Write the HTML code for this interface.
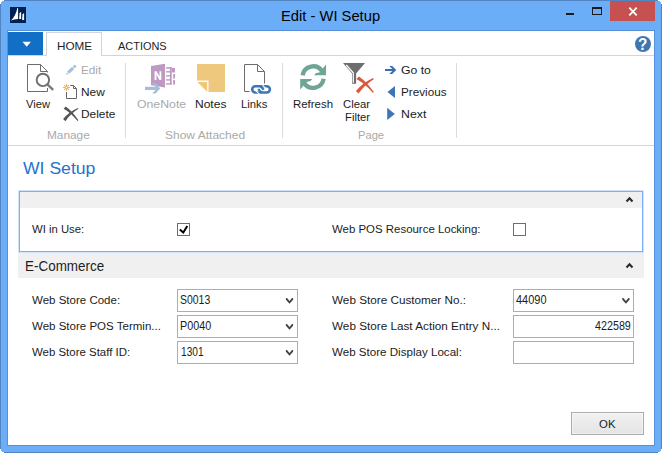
<!DOCTYPE html>
<html>
<head>
<meta charset="utf-8">
<title>Edit - WI Setup</title>
<style>
html,body{margin:0;padding:0;}
body{width:662px;height:453px;overflow:hidden;background:#fff;font-family:"Liberation Sans",sans-serif;font-size:12px;color:#000;position:relative;}
.a{position:absolute;}
.t{position:absolute;white-space:nowrap;line-height:1;transform-origin:0 0;}
#frame{left:0;top:0;width:662px;height:453px;background:#6badf7;box-sizing:border-box;border:1px solid #5284c1;}
#client{left:8px;top:31px;width:646px;height:414px;background:#fff;box-shadow:0 0 0 1px #5791db;}
#close{left:610px;top:1px;width:45px;height:20px;background:#c75050;}
#appbtn{left:8px;top:32px;width:35px;height:23px;background:#116fc6;}
#tabline{left:8px;top:55px;width:646px;height:1px;background:#d4d4d4;}
#hometab{left:46px;top:32px;width:56px;height:24px;background:#fff;border:1px solid #d4d4d4;border-bottom:none;box-sizing:border-box;}
#ribline{left:8px;top:145px;width:646px;height:1px;background:#d4d4d4;}
.sep{position:absolute;width:1px;background:#dcdcdc;top:63px;height:75px;}
.fth{position:absolute;background:#f0f0f0;}
.inp{position:absolute;box-sizing:border-box;border:1px solid #abadb3;background:#fff;width:121px;height:23px;}
.chk{position:absolute;box-sizing:border-box;width:13px;height:13px;border:1px solid #6e6e6e;background:#fff;}
#ok{left:571px;top:412px;width:73px;height:23px;box-sizing:border-box;border:1px solid #acacac;background:linear-gradient(#f1f1f1,#e4e4e4);box-shadow:inset 0 0 0 1px rgba(255,255,255,0.45);}
svg{position:absolute;left:0;top:0;overflow:visible;}
</style>
</head>
<body>
<div class="a" id="frame"></div>
<div class="a" id="client"></div>
<div class="a" id="close"></div>
<span class="t" style="left:280.73px;top:9px;font-size:14.6px;color:#000;transform:scaleX(1.0099);">Edit - WI Setup</span>
<div class="a" id="tabline"></div>
<div class="a" id="appbtn"></div>
<div class="a" id="hometab"></div>
<span class="t" style="left:56.80px;top:41px;font-size:11.8px;color:#1e1e1e;transform:scaleX(0.9934);">HOME</span>
<span class="t" style="left:118.08px;top:41px;font-size:11.8px;color:#1e1e1e;transform:scaleX(0.9281);">ACTIONS</span>
<div class="a" id="ribline"></div>
<div class="sep" style="left:125px;"></div>
<div class="sep" style="left:282px;"></div>
<div class="sep" style="left:456px;"></div>
<span class="t" style="left:26.14px;top:98px;font-size:11.7px;color:#1c1c1c;transform:scaleX(0.954);">View</span><span class="t" style="left:80.70px;top:64px;font-size:11.7px;color:#a9a9a9;transform:scaleX(1.0046);">Edit</span><span class="t" style="left:80.70px;top:86px;font-size:11.7px;color:#1c1c1c;transform:scaleX(1.0172);">New</span><span class="t" style="left:80.70px;top:108px;font-size:11.7px;color:#1c1c1c;transform:scaleX(1.0181);">Delete</span><span class="t" style="left:46.60px;top:129px;font-size:11.7px;color:#a9a9a9;transform:scaleX(1.0126);">Manage</span>
<span class="t" style="left:137.08px;top:98px;font-size:11.7px;color:#a9a9a9;transform:scaleX(1.0501);">OneNote</span><span class="t" style="left:195.00px;top:98px;font-size:11.7px;color:#1c1c1c;transform:scaleX(1.0282);">Notes</span><span class="t" style="left:241.40px;top:98px;font-size:11.7px;color:#1c1c1c;transform:scaleX(0.9675);">Links</span><span class="t" style="left:165.20px;top:129px;font-size:11.7px;color:#a9a9a9;transform:scaleX(1.0276);">Show Attached</span>
<span class="t" style="left:293.30px;top:98px;font-size:11.7px;color:#1c1c1c;transform:scaleX(0.9788);">Refresh</span><span class="t" style="left:342.68px;top:98px;font-size:11.7px;color:#1c1c1c;transform:scaleX(0.9675);">Clear</span><span class="t" style="left:344.70px;top:111px;font-size:11.7px;color:#1c1c1c;transform:scaleX(0.9642);">Filter</span><span class="t" style="left:401.04px;top:64px;font-size:11.7px;color:#1c1c1c;transform:scaleX(1.0445);">Go to</span><span class="t" style="left:400.80px;top:86px;font-size:11.7px;color:#1c1c1c;transform:scaleX(1.0003);">Previous</span><span class="t" style="left:400.60px;top:108px;font-size:11.7px;color:#1c1c1c;transform:scaleX(1.0535);">Next</span><span class="t" style="left:357.50px;top:129px;font-size:11.7px;color:#a9a9a9;transform:scaleX(0.955);">Page</span>
<span class="t" style="left:23.49px;top:161px;font-size:16.9px;color:#2672cc;transform:scaleX(1.0418);">WI Setup</span>
<div class="fth" style="left:20px;top:192px;width:622px;height:16px;"></div>
<div class="a" style="left:19px;top:191px;width:624px;height:61px;box-sizing:border-box;border:1px solid #7eaefa;box-shadow:0 0 0 1px rgba(126,174,250,0.35);"></div>
<span class="t" style="left:32.08px;top:223px;font-size:11.7px;color:#1c1c1c;transform:scaleX(0.9686);">WI in Use:</span>
<div class="chk" style="left:177px;top:223px;"></div>
<span class="t" style="left:332.18px;top:223px;font-size:11.7px;color:#1c1c1c;transform:scaleX(0.9784);">Web POS Resource Locking:</span>
<div class="chk" style="left:513px;top:223px;"></div>
<div class="fth" style="left:18px;top:253px;width:626px;height:25px;"></div>
<span class="t" style="left:24.80px;top:259px;font-size:14.2px;color:#1e1e1e;transform:scaleX(0.9475);">E-Commerce</span>
<span class="t" style="left:32.38px;top:294px;font-size:11.7px;color:#1c1c1c;transform:scaleX(0.9852);">Web Store Code:</span><span class="t" style="left:32.38px;top:320px;font-size:11.7px;color:#1c1c1c;transform:scaleX(0.9856);">Web Store POS Termin...</span><span class="t" style="left:32.38px;top:346px;font-size:11.7px;color:#1c1c1c;transform:scaleX(0.9786);">Web Store Staff ID:</span>
<div class="inp" style="left:177px;top:289px;"></div>
<div class="inp" style="left:177px;top:315px;"></div>
<div class="inp" style="left:177px;top:341px;"></div>
<span class="t" style="left:179.54px;top:295px;font-size:11.9px;color:#1c1c1c;transform:scaleX(0.8802);">S0013</span><span class="t" style="left:180.02px;top:321px;font-size:11.9px;color:#1c1c1c;transform:scaleX(0.9072);">P0040</span><span class="t" style="left:180.71px;top:347px;font-size:11.9px;color:#1c1c1c;transform:scaleX(0.8538);">1301</span>
<span class="t" style="left:331.98px;top:294px;font-size:11.7px;color:#1c1c1c;transform:scaleX(1.0034);">Web Store Customer No.:</span><span class="t" style="left:331.88px;top:320px;font-size:11.7px;color:#1c1c1c;transform:scaleX(1.0034);">Web Store Last Action Entry N...</span><span class="t" style="left:331.88px;top:346px;font-size:11.7px;color:#1c1c1c;transform:scaleX(0.9914);">Web Store Display Local:</span>
<div class="inp" style="left:513px;top:289px;"></div>
<div class="inp" style="left:513px;top:315px;"></div>
<div class="inp" style="left:513px;top:341px;"></div>
<span class="t" style="left:515.89px;top:295px;font-size:11.9px;color:#1c1c1c;transform:scaleX(0.9222);">44090</span><span class="t" style="left:595.21px;top:321px;font-size:11.9px;color:#1c1c1c;transform:scaleX(0.9029);">422589</span>
<div class="a" id="ok"></div>
<span class="t" style="left:598.81px;top:419px;font-size:11.8px;color:#1c1c1c;transform:scaleX(0.9673);">OK</span>

<svg width="662" height="453" viewBox="0 0 662 453">
<!-- corner notches -->
<g fill="#fff">
<rect x="0" y="0" width="4" height="1"/><rect x="0" y="0" width="2" height="2"/><rect x="0" y="0" width="1" height="4"/>
<rect x="658" y="0" width="4" height="1"/><rect x="660" y="0" width="2" height="2"/><rect x="661" y="0" width="1" height="4"/>
<rect x="0" y="452" width="4" height="1"/><rect x="0" y="451" width="2" height="2"/><rect x="0" y="449" width="1" height="4"/>
<rect x="658" y="452" width="4" height="1"/><rect x="660" y="451" width="2" height="2"/><rect x="661" y="449" width="1" height="4"/>
</g>
<!-- app icon -->
<g transform="translate(10,7)">
<rect width="16" height="16" fill="#00204f"/>
<path d="M1,13.4 Q5.6,9 7.4,0.9 L8.1,0.9 L8.1,11.9 Q4,12.1 1,13.4 Z" fill="#fff"/>
<path d="M9.1,12.1 L9.6,6.2 L10.6,5 L11.1,5.4 L11.1,12.1 Z" fill="#fff"/>
<path d="M12.1,12.9 L12.5,7.4 L13.6,6.2 L14.1,6.6 L14.1,12.9 Z" fill="#fff"/>
</g>
<!-- window buttons -->
<rect x="566" y="13" width="8" height="2" fill="#1a1a1a"/>
<path d="M592,7 h10 v8 h-10 Z M593,9 v5 h8 v-5 Z" fill="#1e1a17" fill-rule="evenodd"/>
<path d="M629.3,7.7 L636.7,15.3 M636.7,7.7 L629.3,15.3" stroke="#fff" stroke-width="1.8" fill="none"/>
<!-- app menu triangle -->
<path d="M22.5,41.7 L30.9,41.7 L26.7,46.8 Z" fill="#fff"/>
<!-- help -->
<circle cx="643" cy="44" r="8" fill="#3e76b2"/>
<!-- View icon -->
<g fill="none" stroke="#6d6d6d" stroke-width="1">
<path d="M47.5,72.5 V71.5 L40.5,64.5 H27.5 V91.5 H47.5 V88"/>
<path d="M40.5,64.5 V71.5 H47.5"/>
</g>
<circle cx="42.9" cy="79.9" r="6.2" fill="#fff" stroke="#6f6f6f" stroke-width="1.9"/>
<path d="M47.6,84.6 L53.2,89.9" stroke="#7a7a7a" stroke-width="2.4" fill="none"/>
<!-- Edit pencil -->
<g transform="translate(66.1,74.7) rotate(-44.1)" fill="#a3bfdd"><path d="M0,0 L2.3,-1.2 V1.2 Z"/><rect x="3" y="-1.5" width="6.9" height="3"/><rect x="10.6" y="-1.5" width="2.7" height="3" rx="1.1"/></g>
<!-- New icon -->
<g fill="none" stroke="#666" stroke-width="1">
<path d="M70.2,85.5 H73.5 L76.5,88.5 V98.5 H66.5 V92"/>
<path d="M73.5,85.5 V88.5 H76.5"/>
</g>
<g stroke="#e8b56d" stroke-width="1.1" fill="none">
<path d="M66.5,84 V91 M63,87.5 H70 M64.1,85.1 L68.9,89.9 M68.9,85.1 L64.1,89.9"/>
</g>
<circle cx="66.5" cy="87.5" r="0.8" fill="#fff"/>
<!-- Delete icon -->
<path d="M63.6,108.8 L65.7,106.5 Q72.4,111.2 78.4,120.3 L77.6,121.1 Q70.6,112.6 63.6,108.8 Z" fill="#555"/>
<path d="M63.1,118.9 L65.5,121.2 Q70.6,113.6 78.4,108.8 L77.7,107.9 Q68.8,112 63.1,118.9 Z" fill="#555"/>
<!-- OneNote -->
<path d="M151,66 L165,63.7 V87.6 L151,85.3 Z" fill="#be9ac2"/>
<g fill="#be9ac2">
<rect x="166" y="67.2" width="5.7" height="1.5"/>
<rect x="166" y="71.1" width="4" height="1.4"/>
<rect x="166" y="75.1" width="4" height="1.4"/>
<rect x="166" y="79.2" width="4" height="1.4"/>
<rect x="166" y="83.2" width="5.7" height="1.4"/>
<rect x="169.9" y="67.2" width="1.8" height="17.4"/>
<rect x="171.7" y="68" width="3.3" height="4.5"/>
<rect x="173.2" y="74" width="1.8" height="4.6"/>
<rect x="173.2" y="80" width="1.8" height="4.6"/>
</g>
<path d="M154.6,80 V71.2 H156.5 L159.5,76.6 V71.2 H161.3 V80 H159.4 L156.4,74.6 V80 Z" fill="#fff"/>
<path d="M145,86.8 H155.5 L152.2,83.3 H155.6 L160.2,88.4 L155.6,93.6 H152.2 L155.5,90 H145 Z" fill="#a3bfdc"/>
<!-- Notes -->
<path d="M197,64 H225 V92 H208.5 V80.6 H197 Z" fill="#eec87d"/>
<path d="M197.2,81.9 H207.2 V91.8 Z" fill="#eec87d"/>
<!-- Links -->
<g fill="none" stroke="#6d6d6d" stroke-width="1">
<path d="M249.6,91.5 H244.5 V64.5 H257.5 L264.5,71.5 V83.6"/>
<path d="M257.5,64.5 V71.5 H264.5"/>
</g>
<g fill="none" stroke="#3a78b8">
<rect x="252.2" y="86.2" width="17.7" height="6.3" rx="3.15" stroke-width="2.6"/>
<path d="M260.4,86 L263.7,89.7 M261.6,92.7 L258.2,89" stroke-width="2.3"/>
</g>
<path d="M262,84.4 L265.2,88 M256,90.7 L259.6,94.6" stroke="#fff" stroke-width="1.1" fill="none"/>
<!-- Refresh -->
<g fill="none" stroke="#6ea596" stroke-width="4.3">
<path d="M302.6,75.4 A10.6,10.6 0 0 1 322,71.2"/>
<path d="M323.6,78.8 A10.6,10.6 0 0 1 304.2,83"/>
</g>
<path d="M326,64.6 V75.2 H314 L316,73 Q320,73 321,70.5 Z" fill="#6ea596"/>
<path d="M300.2,89.6 V79 H312.2 L310.2,81.2 Q306.2,81.2 305.2,83.7 Z" fill="#6ea596"/>
<!-- Clear filter -->
<path d="M343,63 H365 L356.1,73.6 V83.8 H352.1 V73.6 Z" fill="#6d6d6d"/>
<path d="M346.3,65 L353.3,72.8 V82.8" stroke="#fff" stroke-width="1.2" fill="none"/>
<path d="M356.3,79 L359,76.4 Q366.8,82 373.8,91.9 L372.9,92.9 Q365,83.6 356.3,79 Z" fill="#d9583a"/>
<path d="M355.9,91 L358.5,93.5 Q364.5,85 373.8,79.2 L373,78.1 Q362.5,83.2 355.9,91 Z" fill="#d9583a"/>
<!-- Go to -->
<path d="M385,69.1 H394 V70.9 H385 Z M389.3,66.1 H392.2 L396.3,70 L392.2,73.9 H389.3 L393.3,70 Z" fill="#3570b4"/>
<path d="M395,86.1 V98.1 L387.4,92.1 Z" fill="#3d76b6"/>
<path d="M387.2,107.8 V119.9 L394.8,113.9 Z" fill="#3d76b6"/>
<!-- fasttab chevrons -->
<g fill="none" stroke="#2a2a2a" stroke-width="2.1">
<path d="M626.5,201.5 L629.5,198.35 L632.5,201.5"/>
<path d="M626.5,267.5 L629.5,264.35 L632.5,267.5"/>
</g>
<!-- combo chevrons -->
<path d="M285.9,298.1 V299.8 L289.5,303.8 L293.1,299.8 V298.1 H292.0 L289.5,301.0 L287.0,298.1 Z" fill="#444"/>
<path d="M285.9,324.1 V325.8 L289.5,329.8 L293.1,325.8 V324.1 H292.0 L289.5,327.0 L287.0,324.1 Z" fill="#444"/>
<path d="M285.9,350.1 V351.8 L289.5,355.8 L293.1,351.8 V350.1 H292.0 L289.5,353.0 L287.0,350.1 Z" fill="#444"/>
<path d="M622.3,298.1 V299.8 L625.9,303.8 L629.5,299.8 V298.1 H628.4 L625.9,301.0 L623.4,298.1 Z" fill="#444"/>
<!-- check mark -->
<path d="M179.8,229.4 L183.3,232.5 L187.3,225.9" stroke="#000" stroke-width="2" fill="none"/>
</svg>

<span class="t" style="left:638.11px;top:37px;font-size:16.0px;color:#fff;transform:scaleX(0.9569);font-weight:bold;">?</span>
</body>
</html>
